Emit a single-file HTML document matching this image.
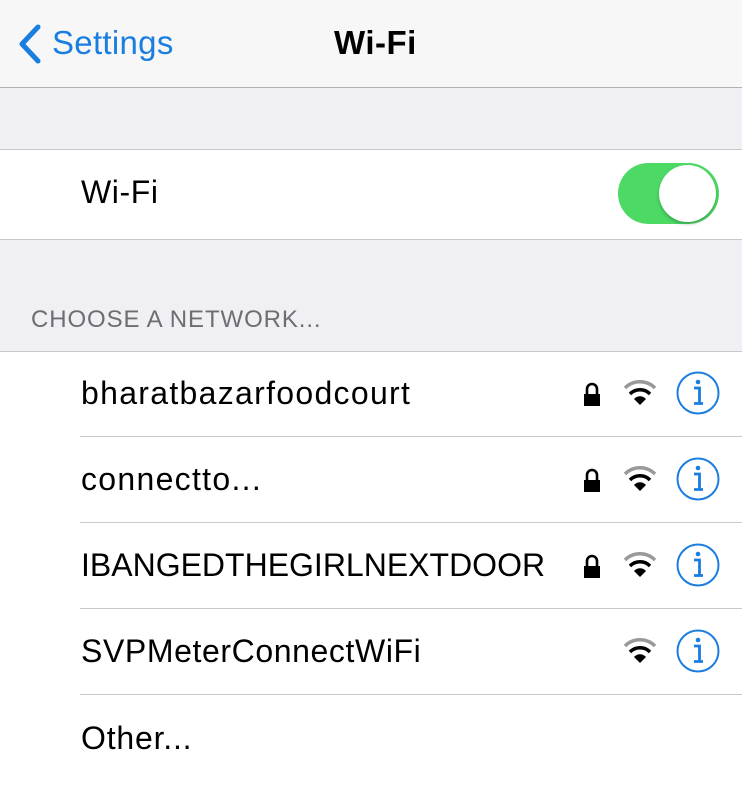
<!DOCTYPE html>
<html><head><meta charset="utf-8"><style>
body{margin:0;width:742px;height:784px;background:#efeff4;font-family:"Liberation Sans",sans-serif;overflow:hidden;position:relative}
.nav{position:absolute;left:0;top:0;width:742px;height:87px;background:#f7f7f7;border-bottom:1px solid #b2b2b2}
.abs{position:absolute}
.white{position:absolute;left:0;width:742px;background:#fff}
.t{position:absolute;font-size:32px;color:#000;letter-spacing:0.6px}
.sep{position:absolute;left:80px;right:0;height:1px;background:#c8c7cc}
</style></head><body>
<div class="nav">
<svg class="abs" style="left:16px;top:24px" width="28" height="40"><path d="M22 3 L6 20 L22 37" fill="none" stroke="#1a7ee0" stroke-width="5" stroke-linecap="round" stroke-linejoin="round"/></svg>
<div class="abs" style="left:52px;top:24px;font-size:33px;color:#1a7ee0;letter-spacing:0.3px">Settings</div>
<div class="abs" style="left:334px;top:24px;font-size:33px;font-weight:bold;letter-spacing:0.5px">Wi-Fi</div>
</div>
<div class="white" style="top:149px;height:89px;border-top:1px solid #c8c7cc;border-bottom:1px solid #c8c7cc"></div>
<div class="t" style="left:81px;top:174px">Wi-Fi</div>
<div class="abs" style="left:618px;top:163px;width:101px;height:61px;border-radius:31px;background:#4cd964"></div>
<div class="abs" style="left:659px;top:165px;width:57px;height:57px;border-radius:50%;background:#fff;box-shadow:0 2px 3px rgba(0,0,0,.25)"></div>
<div class="abs" style="left:31px;top:306px;font-size:24px;color:#6d6d72;letter-spacing:0.9px">CHOOSE A NETWORK...</div>
<div class="white" style="top:351px;height:433px;border-top:1px solid #c8c7cc"></div>
<div class="sep" style="top:436px"></div>
<div class="sep" style="top:522px"></div>
<div class="sep" style="top:608px"></div>
<div class="sep" style="top:694px"></div>
<div class="t" style="left:81px;top:375px;letter-spacing:1.3px">bharatbazarfoodcourt</div>
<div class="t" style="left:81px;top:461px;letter-spacing:1.3px">connectto...</div>
<div class="t" style="left:81px;top:547px;letter-spacing:0px">IBANGEDTHEGIRLNEXTDOOR</div>
<div class="t" style="left:81px;top:633px;letter-spacing:0.6px">SVPMeterConnectWiFi</div>
<div class="t" style="left:81px;top:720px;letter-spacing:0.8px">Other...</div>
<svg class="abs" style="left:0;top:0" width="742" height="784">
<defs>
<g id="lk"><path d="M-5 0 V-5 A5 5 0 0 1 5 -5 V0" fill="none" stroke="#000" stroke-width="2.6"/><rect x="-8" y="0" width="16" height="12" fill="#000"/></g>
<g id="wf"><path d="M-15 -8 A21 21 0 0 1 15 -8" fill="none" stroke="#000" stroke-width="3.5" opacity="0.4"/><path d="M-10 -2 A14 14 0 0 1 10 -2" fill="none" stroke="#000" stroke-width="3.5"/><path d="M-6 3 L0 9 L6 3 A8 8 0 0 0 -6 3Z" fill="#000"/></g>
<g id="in"><circle r="20.5" fill="none" stroke="#1a7ee0" stroke-width="2"/><circle cy="-11" r="2.3" fill="#1a7ee0"/><path d="M-4 -5 H1.5 V10 M-4 10.5 H5" fill="none" stroke="#1a7ee0" stroke-width="2.8"/></g>
</defs>
<use href="#lk" x="592" y="394"/><use href="#wf" x="640" y="396"/><use href="#in" x="698" y="393"/>
<use href="#lk" x="592" y="480"/><use href="#wf" x="640" y="482"/><use href="#in" x="698" y="479"/>
<use href="#lk" x="592" y="566"/><use href="#wf" x="640" y="568"/><use href="#in" x="698" y="565"/>
<use href="#wf" x="640" y="654"/><use href="#in" x="698" y="651"/>
</svg>
</body></html>
